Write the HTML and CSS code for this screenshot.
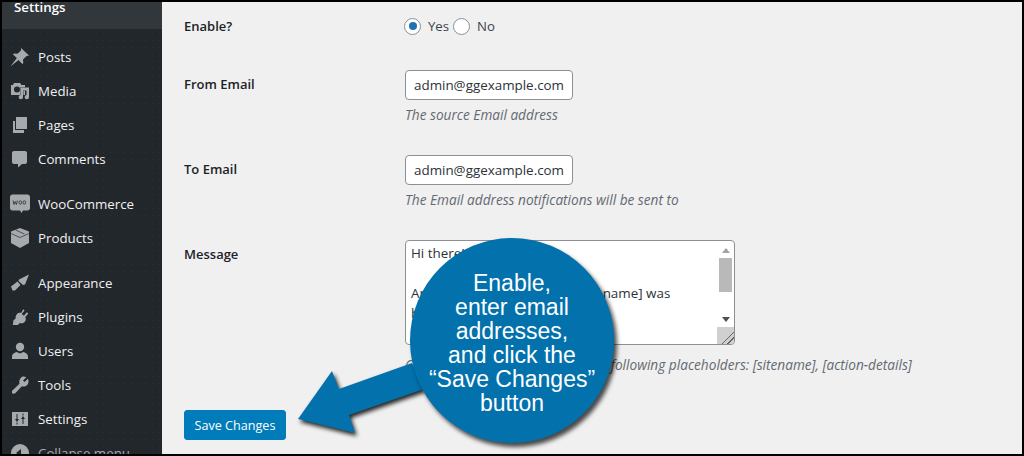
FILE: index.html
```html
<!DOCTYPE html>
<html lang="en">
<head>
  <meta charset="UTF-8" />
  <title>Settings</title>
  <link rel="stylesheet" href="styles.css">
</head>
<body>
  <div class="frame">
    <aside class="sidebar">
      <div class="menu-title">Settings</div>
      <ul class="menu">
        <li><svg viewBox="0 0 20 20"><path d="M11 1l8 7.500-2.500.500-3.500 3.500.3 3.500-1 1-3.800-4L1 19l-.1-.3 6-7.800L3 7.500l1-1 3.500.3L11 3.500z"/></svg>Posts</li>
        <li><svg viewBox="0 0 20 20"><path fill-rule="evenodd" d="M4 2h6l1.500 2H15v10H1V4h2zM7 5.500a3 3 0 1 0 0 6 3 3 0 0 0 0-6z"/><path class="cut" d="M10.500 6.500H19v9.500a2.200 2.200 0 1 1-2.500-2.100V9.500h-3.500v6.500a2.200 2.200 0 1 1-2.500-2.100z"/></svg>Media</li>
        <li><svg viewBox="0 0 20 20"><path d="M6 2h11v12H6z"/><path d="M3 6h2v9h9v3H3z"/></svg>Pages</li>
        <li><svg viewBox="0 0 20 20"><path d="M4 2h11c1.100 0 2 .9 2 2v9c0 1.100-.9 2-2 2h-3l-4 3.500V15H4c-1.100 0-2-.9-2-2V4c0-1.100.9-2 2-2z"/></svg>Comments</li>
        <li class="sep"><svg viewBox="0 0 20 20"><path d="M2.500.5h15C18.900.5 20 1.600 20 3v11c0 1.400-1.100 2.500-2.500 2.500H13L11.500 19 10 16.500H2.500C1.100 16.500 0 15.400 0 14V3C0 1.600 1.100.5 2.500.5z"/><path class="woo" d="M3 6.500l1 4 1.200-3 1.200 3 1-4M9 8.500a1.300 1.700 0 1 0 2.600 0 1.300 1.700 0 1 0-2.600 0M13 8.500a1.300 1.700 0 1 0 2.600 0 1.300 1.700 0 1 0-2.600 0"/></svg>WooCommerce</li>
        <li><svg viewBox="0 0 20 20"><path d="M10 0l9 3.500v11.500L10 20l-9-5V3.500z"/><path class="line" d="M1 5.500L10 9.500l9-4M5.500 2l9 4"/></svg>Products</li>
        <li class="sep"><svg viewBox="0 0 20 20"><path d="M1 13.500L7.500 8.500l3 3.500L5 17.500H2.500z"/><path d="M9 6.500L19 1.500l-4 10-2 .5L8.500 8z"/></svg>Appearance</li>
        <li><svg viewBox="0 0 20 20"><path d="M13.100 2.300l1.500 1.200-2.900 3.400 2.200 1.800 2.900-3.400 1.500 1.200-3 3.500c.8 1.800.5 3.700-.7 5-1.200 1.300-3 1.700-4.600 1.100L7.700 18H2.800l.7-4.700 2.200-1.900c-.3-1.500.1-3 1.100-4.200 1.100-1.200 2.800-1.600 4.400-1.300z"/></svg>Plugins</li>
        <li><svg viewBox="0 0 20 20"><circle cx="10" cy="6" r="4.200"/><path d="M2 18v-2.500c0-2.500 2.500-4 5-4.500 1 1 2 1.300 3 1.300s2-.3 3-1.300c2.500.5 5 2 5 4.500V18z"/></svg>Users</li>
        <li><svg viewBox="0 0 20 20"><path d="M13.500 1.500c1 0 1.900.2 2.700.7L13 5.400l1.600 1.600 3.200-3.200c.5.800.7 1.700.7 2.700 0 3-2.400 5-5 5-.6 0-1.200-.1-1.700-.3L5.500 18c-.9.900-2.300 1.100-3.100.3-.8-.8-.6-2.200.3-3.100l6.800-6.400c-.2-.5-.2-1.100-.2-1.800 0-3 2-5.500 4.200-5.500z"/></svg>Tools</li>
        <li><svg viewBox="0 0 20 20"><path fill-rule="evenodd" d="M2 3h16v14H2zM6.500 5h1v5H9l-2 3-2-3h1.500zM6.500 13.500h1v2h-1zM12.500 15h1v-5H15l-2-3-2 3h1.500zM12.500 4.500h1v2h-1z"/></svg>Settings</li>
        <li class="collapse"><svg viewBox="0 0 20 20"><path fill-rule="evenodd" d="M10 1a9 9 0 1 1 0 18 9 9 0 0 1 0-18zM11 6L6 10l5 4z"/></svg>Collapse menu</li>
      </ul>
    </aside>

    <main class="content">
      <div class="row row-enable">
        <label class="label">Enable?</label>
        <div class="radios">
          <input type="radio" name="enable" checked /><span class="radio-text">Yes</span>
          <input type="radio" name="enable" /><span class="radio-text">No</span>
        </div>
      </div>

      <div class="row">
        <label class="label">From Email</label>
        <div>
          <input class="text-input" type="text" value="admin@ggexample.com" />
          <p class="desc">The source Email address</p>
        </div>
      </div>

      <div class="row">
        <label class="label">To Email</label>
        <div>
          <input class="text-input" type="text" value="admin@ggexample.com" />
          <p class="desc">The Email address notifications will be sent to</p>
        </div>
      </div>

      <div class="row">
        <label class="label">Message</label>
        <div>
          <div class="message">
            <div class="message-text">Hi there!<br><br>An action on your website [sitename] was<br>blocked</div>
            <div class="scroll">
              <span class="arrow-up"></span>
              <span class="thumb"></span>
              <span class="arrow-down"></span>
              <span class="grip"></span>
            </div>
          </div>
          <p class="desc desc-message">Customize the message, using the following placeholders: [sitename], [action-details]</p>
        </div>
      </div>

      <button class="save-btn">Save Changes</button>
    </main>

    <svg class="arrow" viewBox="0 0 1024 456"><polygon points="298,419 332,371 339,389 412,363 424,389 349,415 355,433"/></svg>
    <div class="callout">Enable,<br>enter email<br>addresses,<br>and click the<br>“Save Changes”<br>button</div>
  </div>
</body>
</html>
```

FILE: styles.css
```css
html, body { margin: 0; padding: 0; height: 100%; overflow: hidden; }
body { font-family: "Open Sans", Arial, sans-serif; font-size: 13px; color: #1d2327; }
.frame { position: relative; display: flex; width: 1024px; height: 456px; box-sizing: border-box; border: 2px solid #000; overflow: hidden; background: #f0f0f1; }

/* sidebar */
.sidebar { width: 160px; flex-shrink: 0; font-size: 13.3px; color: #f0f0f1; background-color: #22272c; background-image: radial-gradient(#2a3035 .7px, transparent .8px); background-size: 7px 7px; }
.menu-title { height: 27px; line-height: 11px; padding-left: 12px; font-weight: 600; background: #32373c; color: #fff; }
.menu { list-style: none; margin: 11px 0 0; padding: 0; }
.menu li { display: flex; align-items: center; gap: 8px; height: 34px; padding-left: 8px; }
.menu li.sep { margin-top: 11px; }
.menu li.collapse { color: #a7aaad; }
.menu svg { width: 20px; height: 20px; flex-shrink: 0; fill: #a7aaad; }
.menu .cut { stroke: #22272c; stroke-width: .8; paint-order: stroke; }
.menu .woo { fill: none; stroke: #32373c; stroke-width: .9; }
.menu .line { fill: none; stroke: #3a3f44; stroke-width: .8; }

/* form */
.content { flex: 1; padding: 14px 0 0 22px; }
.row { display: grid; grid-template-columns: 221px 1fr; margin-bottom: 29px; }
.row-enable { margin-bottom: 34px; }
.label { font-weight: 600; line-height: 20px; margin-top: 4px; }
.row-enable .label { margin-top: 0; }
.radios { display: flex; align-items: center; height: 20px; margin-left: -1px; font-size: 13.2px; }
.radios input { appearance: none; width: 17px; height: 17px; margin: 0; border: 1px solid #8c8f94; border-radius: 50%; background: #fff; display: flex; align-items: center; justify-content: center; }
.radios input:checked::before { content: ""; width: 8px; height: 8px; border-radius: 50%; background: #2271b1; }
.radio-text { margin: 0 4px 0 7px; color: #3c434a; }
.text-input { display: block; width: 168px; height: 30px; box-sizing: border-box; margin: 0; padding: 0 8px; border: 1px solid #8c8f94; border-radius: 4px; background: #fff; font: inherit; font-size: 13.4px; color: #2c3338; }
.desc { margin: 4px 0 0; line-height: 22px; font-size: 13.65px; font-style: italic; color: #646970; white-space: nowrap; }
.desc-message { margin-top: 9px; }

.message { display: flex; width: 330px; height: 105px; box-sizing: border-box; border: 1px solid #8c8f94; border-radius: 4px; background: #fff; overflow: hidden; }
.message-text { flex: 1; padding: 2px 5px; line-height: 20px; font-size: 13.4px; color: #2c3338; white-space: nowrap; overflow: hidden; }
.scroll { display: flex; flex-direction: column; align-items: center; width: 17px; }
.arrow-up { margin-top: 7px; border: 4px solid transparent; border-top: 0; border-bottom: 5px solid #a3a3a3; }
.thumb { width: 13px; height: 34px; margin-top: 5px; background: #b9b9b9; }
.arrow-down { margin-top: 25px; border: 4px solid transparent; border-bottom: 0; border-top: 5px solid #505050; }
.grip { width: 100%; flex: 1; margin-top: 5px; background: linear-gradient(135deg, #d0d0d0 62%, #666 62%, #666 67%, #d0d0d0 67%, #d0d0d0 78%, #666 78%, #666 83%, #d0d0d0 83%); }

.save-btn { display: block; width: 102px; height: 30px; margin-top: 34px; padding: 0; border: 1px solid #007cba; border-radius: 3px; background: #007cba; color: #fff; font: inherit; font-size: 12.6px; }

/* annotation over the page */
.arrow { position: absolute; left: -2px; top: -2px; width: 1024px; height: 456px; fill: #0271ac; filter: drop-shadow(2px 3px 2px rgba(0,0,0,.85)); }
.callout { position: absolute; left: 408px; top: 236px; width: 204px; height: 205px; box-sizing: border-box; padding-top: 4px; display: flex; align-items: center; justify-content: center; text-align: center; border-radius: 50%; background: #0271ac; box-shadow: 3px 4px 4px rgba(0,0,0,.7); color: #fff; font-family: "Liberation Sans", Arial, sans-serif; font-size: 23px; line-height: 24px; }
```
